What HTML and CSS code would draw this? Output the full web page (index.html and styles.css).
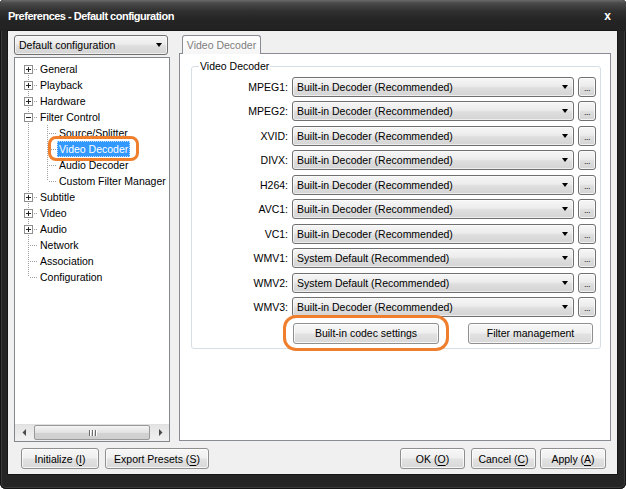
FILE: index.html
```html
<!DOCTYPE html>
<html>
<head>
<meta charset="utf-8">
<link rel="stylesheet" href="styles.css">
</head>
<body>
<div class="window">
  <div class="titlebar">
    <span class="title">Preferences - Default configuration</span>
    <span class="close">x</span>
  </div>
  <div class="client">
    <div class="main">
      <div class="left">
        <div class="combo combo-top"><span class="combo-text">Default configuration</span><span class="arrow"></span></div>
        <div class="tree">
          <div class="items">
            <div class="row"><span class="cell first"><svg class="box" width="9" height="9" viewBox="0 0 9 9"><rect x=".5" y=".5" width="8" height="8" fill="#fff" stroke="#8f8f8f"/><path d="M2 4.5h5M4.5 2v5" stroke="#222"/></svg></span><span class="label">General</span></div>
            <div class="row"><span class="cell tee"><svg class="box" width="9" height="9" viewBox="0 0 9 9"><rect x=".5" y=".5" width="8" height="8" fill="#fff" stroke="#8f8f8f"/><path d="M2 4.5h5M4.5 2v5" stroke="#222"/></svg></span><span class="label">Playback</span></div>
            <div class="row"><span class="cell tee"><svg class="box" width="9" height="9" viewBox="0 0 9 9"><rect x=".5" y=".5" width="8" height="8" fill="#fff" stroke="#8f8f8f"/><path d="M2 4.5h5M4.5 2v5" stroke="#222"/></svg></span><span class="label">Hardware</span></div>
            <div class="row"><span class="cell tee"><svg class="box" width="9" height="9" viewBox="0 0 9 9"><rect x=".5" y=".5" width="8" height="8" fill="#fff" stroke="#8f8f8f"/><path d="M2 4.5h5" stroke="#222"/></svg></span><span class="label">Filter Control</span></div>
            <div class="row"><span class="cell pipe"></span><span class="cell tee"></span><span class="label">Source/Splitter</span></div>
            <div class="row"><span class="cell pipe"></span><span class="cell tee"></span><span class="label selected">Video Decoder</span></div>
            <div class="row"><span class="cell pipe"></span><span class="cell tee"></span><span class="label">Audio Decoder</span></div>
            <div class="row"><span class="cell pipe"></span><span class="cell last"></span><span class="label">Custom Filter Manager</span></div>
            <div class="row"><span class="cell tee"><svg class="box" width="9" height="9" viewBox="0 0 9 9"><rect x=".5" y=".5" width="8" height="8" fill="#fff" stroke="#8f8f8f"/><path d="M2 4.5h5M4.5 2v5" stroke="#222"/></svg></span><span class="label">Subtitle</span></div>
            <div class="row"><span class="cell tee"><svg class="box" width="9" height="9" viewBox="0 0 9 9"><rect x=".5" y=".5" width="8" height="8" fill="#fff" stroke="#8f8f8f"/><path d="M2 4.5h5M4.5 2v5" stroke="#222"/></svg></span><span class="label">Video</span></div>
            <div class="row"><span class="cell tee"><svg class="box" width="9" height="9" viewBox="0 0 9 9"><rect x=".5" y=".5" width="8" height="8" fill="#fff" stroke="#8f8f8f"/><path d="M2 4.5h5M4.5 2v5" stroke="#222"/></svg></span><span class="label">Audio</span></div>
            <div class="row"><span class="cell tee"></span><span class="label">Network</span></div>
            <div class="row"><span class="cell tee"></span><span class="label">Association</span></div>
            <div class="row"><span class="cell last"></span><span class="label">Configuration</span></div>
          </div>
          <div class="hscroll">
            <span class="sb-btn"><svg width="4" height="7" viewBox="0 0 4 7"><path d="M4 0v7L0.5 3.5z" fill="#4a4a4a"/></svg></span>
            <span class="sb-track"><span class="sb-thumb"><span class="grip"></span><span class="grip"></span><span class="grip"></span></span></span>
            <span class="sb-btn"><svg width="4" height="7" viewBox="0 0 4 7"><path d="M0 0v7L3.5 3.5z" fill="#4a4a4a"/></svg></span>
          </div>
        </div>
      </div>
      <div class="right">
        <div class="tabs"><div class="tab">Video Decoder</div></div>
        <div class="panel">
          <fieldset class="group">
            <legend>Video Decoder</legend>
            <div class="rows">
              <div class="drow"><span class="dlabel">MPEG1:</span><span class="combo dcombo"><span class="combo-text">Built-in Decoder (Recommended)</span><span class="arrow"></span></span><span class="dots">...</span></div>
              <div class="drow"><span class="dlabel">MPEG2:</span><span class="combo dcombo"><span class="combo-text">Built-in Decoder (Recommended)</span><span class="arrow"></span></span><span class="dots">...</span></div>
              <div class="drow"><span class="dlabel">XVID:</span><span class="combo dcombo"><span class="combo-text">Built-in Decoder (Recommended)</span><span class="arrow"></span></span><span class="dots">...</span></div>
              <div class="drow"><span class="dlabel">DIVX:</span><span class="combo dcombo"><span class="combo-text">Built-in Decoder (Recommended)</span><span class="arrow"></span></span><span class="dots">...</span></div>
              <div class="drow"><span class="dlabel">H264:</span><span class="combo dcombo"><span class="combo-text">Built-in Decoder (Recommended)</span><span class="arrow"></span></span><span class="dots">...</span></div>
              <div class="drow"><span class="dlabel">AVC1:</span><span class="combo dcombo"><span class="combo-text">Built-in Decoder (Recommended)</span><span class="arrow"></span></span><span class="dots">...</span></div>
              <div class="drow"><span class="dlabel">VC1:</span><span class="combo dcombo"><span class="combo-text">Built-in Decoder (Recommended)</span><span class="arrow"></span></span><span class="dots">...</span></div>
              <div class="drow"><span class="dlabel">WMV1:</span><span class="combo dcombo"><span class="combo-text">System Default (Recommended)</span><span class="arrow"></span></span><span class="dots">...</span></div>
              <div class="drow"><span class="dlabel">WMV2:</span><span class="combo dcombo"><span class="combo-text">System Default (Recommended)</span><span class="arrow"></span></span><span class="dots">...</span></div>
              <div class="drow"><span class="dlabel">WMV3:</span><span class="combo dcombo"><span class="combo-text">Built-in Decoder (Recommended)</span><span class="arrow"></span></span><span class="dots">...</span></div>
            </div>
            <div class="actions">
              <span class="btn btn-codec highlighted">Built-in codec settings</span>
              <span class="btn btn-filter">Filter management</span>
            </div>
          </fieldset>
        </div>
      </div>
    </div>
    <div class="footer">
      <span class="btn btn-init">Initialize (<u>I</u>)</span>
      <span class="btn btn-export">Export Presets (<u>S</u>)</span>
      <span class="spacer"></span>
      <span class="btn btn-ok">OK (<u>O</u>)</span>
      <span class="btn btn-cancel">Cancel (<u>C</u>)</span>
      <span class="btn btn-apply">Apply (<u>A</u>)</span>
    </div>
  </div>
</div>
</body>
</html>
```
FILE: styles.css
```css
html, body {
  margin: 0;
  padding: 0;
  background: #ffffff;
}
body {
  font-family: "Liberation Sans", Arial, sans-serif;
  font-size: 10.5px;
  color: #000;
}
.window {
  width: 626px;
  height: 489px;
  background: #252525;
  display: flex;
  flex-direction: column;
  border-radius: 4px 4px 6px 6px;
  box-shadow: inset 0 0 0 1px #141414, inset 0 0 0 2px #3a3a3a;
  overflow: hidden;
}
.titlebar {
  height: 31px;
  flex: none;
  display: flex;
  align-items: center;
  justify-content: space-between;
  padding: 0 15px 0 8px;
  background: linear-gradient(#6a6a6a 0, #4a4a4a 3px, #303030 11px, #242424 20px, #222 31px);
  color: #fff;
}
.title {
  font-weight: bold;
  font-size: 11px;
  letter-spacing: -0.5px;
}
.close {
  font-weight: bold;
  font-size: 12px;
}
.client {
  flex: none;
  height: 443px;
  margin: 0 9px 0 8px;
  background: #f0f0f0;
  box-sizing: border-box;
  padding: 4px 6px 0;
  display: flex;
  flex-direction: column;
  box-shadow: 0 0 0 1px #161616;
}
.main {
  display: flex;
  height: 407px;
}
.left {
  width: 156px;
  display: flex;
  flex-direction: column;
  gap: 2px;
}
.combo {
  box-sizing: border-box;
  display: flex;
  align-items: center;
  border: 1px solid #707070;
  border-radius: 3px;
  background: linear-gradient(#f6f6f6 0%, #ececec 45%, #dedede 55%, #d4d4d4 100%);
  box-shadow: inset 0 0 0 1px rgba(255,255,255,0.6);
  position: relative;
}
.combo-text {
  padding-left: 4px;
  flex: 1;
  white-space: nowrap;
}
.arrow {
  width: 0;
  height: 0;
  border-left: 3.5px solid transparent;
  border-right: 3.5px solid transparent;
  border-top: 4px solid #000;
  margin-right: 5px;
}
.combo-top {
  width: 154px;
  height: 20px;
}
.tree {
  flex: 1;
  border: 1px solid #828790;
  background: #fff;
  display: flex;
  flex-direction: column;
}
.items {
  padding: 3px 0 0 4px;
}
.row {
  display: flex;
  height: 16px;
  align-items: stretch;
}
.cell {
  width: 19px;
  flex: none;
  position: relative;
}
.cell::before, .cell::after {
  content: "";
  position: absolute;
}
.cell::before {
  left: 9px;
  width: 1px;
  top: 0;
  bottom: 0;
  background: repeating-linear-gradient(to bottom, #a0a0a0 0 1px, transparent 1px 2px);
}
.cell::after {
  left: 10px;
  top: 8px;
  height: 1px;
  width: 8px;
  background: repeating-linear-gradient(to right, transparent 0 1px, #a0a0a0 1px 2px);
}
.cell.pipe::after { display: none; }
.cell.first::before { top: 8px; }
.cell.last::before { bottom: 8px; }
.cell .box {
  position: absolute;
  left: 5px;
  top: 4px;
  z-index: 1;
}
.label {
  padding: 0 2px;
  line-height: 16px;
  white-space: nowrap;
  position: relative;
}
.label.selected {
  background: #3399ff;
  color: #fff;
  outline: 1px dotted #b9dcff;
  outline-offset: -1px;
}
.label.selected::after {
  content: "";
  position: absolute;
  left: -9px;
  right: -9px;
  top: -5px;
  bottom: -4px;
  border: 3px solid #ef7f2d;
  border-radius: 8px;
}
.hscroll {
  margin-top: auto;
  height: 17px;
  display: flex;
  background: linear-gradient(to bottom, #e3e3e3, #f1f1f1);
  box-shadow: inset 0 1px 0 #e0e0e0;
}
.sb-btn {
  width: 17px;
  display: flex;
  align-items: center;
  justify-content: center;
}
.sb-track {
  flex: 1;
  display: flex;
  padding: 1px 2px;
}
.sb-thumb {
  flex: 1;
  box-sizing: border-box;
  border: 1px solid #999;
  border-radius: 2px;
  background: linear-gradient(#f4f4f4, #e2e2e2 50%, #d2d2d2 51%, #cfcfcf);
  display: flex;
  align-items: center;
  justify-content: center;
  gap: 2px;
}
.grip {
  width: 1px;
  height: 6px;
  background: #6a6a6a;
  box-shadow: 1px 0 0 #fff;
}
.right {
  margin-left: 9px;
  width: 432px;
  height: 406px;
  display: flex;
  flex-direction: column;
}
.tabs {
  height: 18px;
  padding-left: 3px;
  display: flex;
  align-items: flex-end;
}
.tab {
  box-sizing: border-box;
  width: 79px;
  height: 19px;
  margin-bottom: -1px;
  border: 1px solid #898c95;
  border-bottom: none;
  border-radius: 3px 3px 0 0;
  background: linear-gradient(#ffffff, #f6f6f6);
  color: #7d7d7d;
  text-align: center;
  line-height: 18px;
  position: relative;
  z-index: 1;
}
.panel {
  flex: 1;
  border: 1px solid #898c95;
  background: #fff;
  padding: 6px 9px 0 11px;
}
.group {
  margin: 0;
  border: 1px solid #d5dfe5;
  border-radius: 3px;
  padding: 5px 4px 4px 7px;
  min-width: 0;
}
.group legend {
  padding: 0 1px;
  line-height: 12px;
}
.rows {
  display: flex;
  flex-direction: column;
  gap: 4.44px;
}
.drow {
  display: flex;
  align-items: center;
  height: 20px;
}
.dlabel {
  width: 89px;
  text-align: right;
  margin-right: 4px;
}
.dcombo {
  width: 282px;
  height: 20px;
  margin-right: 4px;
}
.dots {
  box-sizing: border-box;
  width: 18px;
  height: 20px;
  border: 1px solid #707070;
  border-radius: 3px;
  background: linear-gradient(#f6f6f6 0%, #ececec 45%, #dedede 55%, #d4d4d4 100%);
  box-shadow: inset 0 0 0 1px rgba(255,255,255,0.7);
  text-align: center;
  font-size: 9px;
  line-height: 20px;
  letter-spacing: -0.5px;
  color: #222;
}
.actions {
  margin-top: 6px;
  padding-left: 94px;
  display: flex;
  gap: 29px;
}
.btn {
  box-sizing: border-box;
  height: 21px;
  display: flex;
  align-items: center;
  justify-content: center;
  border: 1px solid #8e8f8f;
  border-radius: 3px;
  background: linear-gradient(#f7f7f7 0%, #efefef 48%, #e2e2e2 52%, #d8d8d8 100%);
  box-shadow: inset 0 0 0 1px rgba(255,255,255,0.75);
  white-space: nowrap;
  position: relative;
}
.btn-codec { width: 146px; }
.btn-filter { width: 125px; }
.highlighted::after {
  content: "";
  position: absolute;
  left: -11px;
  right: -11px;
  top: -9px;
  bottom: -8px;
  border: 3px solid #ef7f2d;
  border-radius: 13px;
}
.footer {
  display: flex;
  padding: 6px 5px 0 7px;
}
.spacer { flex: 1; }
.btn-init { width: 78px; }
.btn-export { width: 104px; margin-left: 6px; }
.btn-ok { width: 65px; }
.btn-cancel { width: 65px; margin-left: 6px; }
.btn-apply { width: 66px; margin-left: 4px; }
u { text-decoration-thickness: 1px; text-underline-offset: 2px; }
```
